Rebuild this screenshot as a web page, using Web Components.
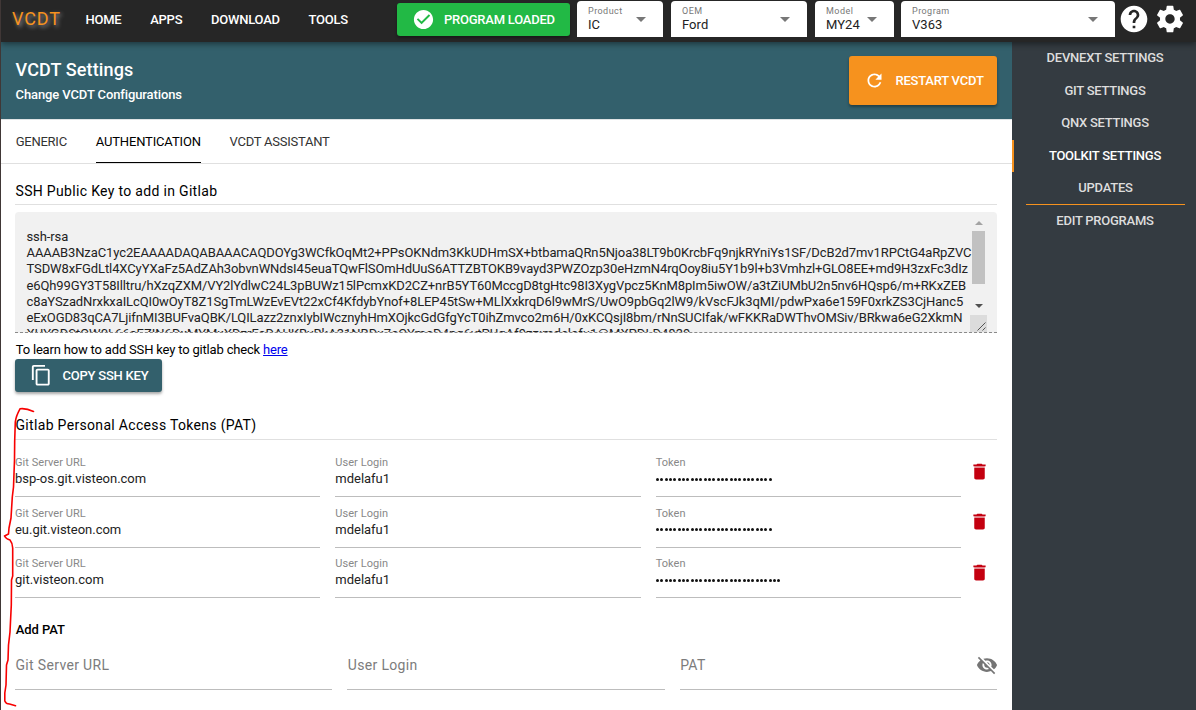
<!DOCTYPE html>
<html lang="en">
<head>
<meta charset="utf-8">
<title>VCDT Settings</title>
<style>
html,body{margin:0;height:100%;overflow:hidden}
body{font-family:Roboto,sans-serif;font-size:13px;color:#000;background:#fff}
</style>
</head>
<body>
<vcdt-app></vcdt-app>
<script>
const define = (name, html, setup) => {
  const t = document.createElement('template');
  t.innerHTML = '<style>*{box-sizing:border-box}:host{box-sizing:border-box}</style>' + html;
  customElements.define(name, class extends HTMLElement {
    constructor() {
      super();
      this.attachShadow({mode: 'open'}).append(t.content.cloneNode(true));
    }
    connectedCallback() { if (setup) setup(this, this.shadowRoot); }
  });
};

const ICONS = {
  check: '<path d="M12 2C6.48 2 2 6.48 2 12s4.48 10 10 10 10-4.48 10-10S17.52 2 12 2zm-2 15l-5-5 1.41-1.41L10 14.17l7.59-7.59L19 8l-9 9z"/>',
  help: '<path d="M12 2C6.48 2 2 6.48 2 12s4.48 10 10 10 10-4.48 10-10S17.52 2 12 2zm1 17h-2v-2h2v2zm2.07-7.75l-.9.92C13.45 12.9 13 13.5 13 15h-2v-.5c0-1.1.45-2.1 1.17-2.83l1.24-1.26c.37-.36.59-.86.59-1.41 0-1.1-.9-2-2-2s-2 .9-2 2H8c0-2.21 1.79-4 4-4s4 1.79 4 4c0 .88-.36 1.68-.93 2.25z"/>',
  gear: '<path d="M19.43 12.98c.04-.32.07-.64.07-.98s-.03-.66-.07-.98l2.11-1.65c.19-.15.24-.42.12-.64l-2-3.46c-.12-.22-.39-.3-.61-.22l-2.49 1c-.52-.4-1.08-.73-1.69-.98l-.38-2.65C14.46 2.18 14.25 2 14 2h-4c-.25 0-.46.18-.49.42l-.38 2.65c-.61.25-1.17.59-1.69.98l-2.49-1c-.23-.09-.49 0-.61.22l-2 3.46c-.13.22-.07.49.12.64l2.11 1.65c-.04.32-.07.65-.07.98s.03.66.07.98l-2.11 1.65c-.19.15-.24.42-.12.64l2 3.46c.12.22.39.3.61.22l2.49-1c.52.4 1.08.73 1.69.98l.38 2.65c.03.24.24.42.49.42h4c.25 0 .46-.18.49-.42l.38-2.65c.61-.25 1.17-.59 1.69-.98l2.49 1c.23.09.49 0 .61-.22l2-3.46c.12-.22.07-.49-.12-.64l-2.11-1.65zM12 15.5c-1.93 0-3.5-1.57-3.5-3.5s1.57-3.5 3.5-3.5 3.5 1.57 3.5 3.5-1.57 3.5-3.5 3.5z"/>',
  refresh: '<path d="M17.65 6.35C16.2 4.9 14.21 4 12 4c-4.42 0-7.99 3.58-7.99 8s3.57 8 7.99 8c3.73 0 6.84-2.55 7.73-6h-2.08c-.82 2.33-3.04 4-5.65 4-3.31 0-6-2.69-6-6s2.69-6 6-6c1.66 0 3.14.69 4.22 1.78L13 11h7V4l-2.35 2.35z"/>',
  copy: '<path d="M16 1H4c-1.1 0-2 .9-2 2v14h2V3h12V1zm3 4H8c-1.1 0-2 .9-2 2v14c0 1.1.9 2 2 2h11c1.100 0 2-.9 2-2V7c0-1.100-.9-2-2-2zm0 16H8V7h11v14z"/>',
  trash: '<path d="M6 19c0 1.100.9 2 2 2h8c1.100 0 2-.9 2-2V8H6z"/><path fill-opacity=".45" d="M6 6h12v2H6z"/><path d="M5 4h3.500l1-1h5l1 1H19v2H5z"/>',
  hidden: '<path d="M12 7c2.760 0 5 2.240 5 5 0 .65-.13 1.260-.36 1.830l2.920 2.920c1.510-1.260 2.700-2.890 3.430-4.750-1.730-4.390-6-7.500-11-7.500-1.400 0-2.740.25-3.980.7l2.160 2.160C10.740 7.130 11.350 7 12 7zM2 4.270l2.280 2.280.46.46C3.080 8.300 1.780 10.020 1 12c1.730 4.390 6 7.500 11 7.500 1.550 0 3.030-.3 4.380-.84l.42.42L19.730 22 21 20.730 3.270 3 2 4.270zM7.530 9.800l1.550 1.550c-.05.21-.08.43-.08.65 0 1.660 1.340 3 3 3 .22 0 .44-.03.65-.08l1.550 1.550c-.67.33-1.410.53-2.200.53-2.760 0-5-2.240-5-5 0-.79.2-1.530.53-2.200zm4.310-.78l3.150 3.150.02-.16c0-1.660-1.340-3-3-3l-.17.01z"/>'
};

define('vcdt-icon', `<style>
:host{display:block;flex:none;width:var(--size,24px);height:var(--size,24px)}
svg{display:block;width:100%;height:100%;fill:currentColor}
</style><svg viewBox="0 0 24 24"></svg>`,
(el, r) => { r.querySelector('svg').innerHTML = ICONS[el.getAttribute('name')]; });

define('vcdt-button', `<style>
:host{display:flex;flex:none;align-items:center;border-radius:3px;color:#fff;font-weight:500;white-space:nowrap;letter-spacing:-.23px;
 box-shadow:0 2px 3px rgba(0,0,0,.35)}
</style><slot></slot>`);

define('vcdt-select', `<style>
:host{display:flex;flex:none;height:36px;background:#fff;border-radius:4px 4px 0 0;justify-content:space-between;padding:3px 17px 0 11px}
.l{font-size:9px;line-height:14px;color:#777;letter-spacing:.45px}
.v{font-size:13px;line-height:14px;color:#222;letter-spacing:.05px}
i{width:0;height:0;border:5px solid transparent;border-top-color:#777;border-bottom:0;margin-top:13px}
</style><div><div class="l"></div><div class="v"><slot></slot></div></div><i></i>`,
(el, r) => { r.querySelector('.l').textContent = el.getAttribute('label'); });

define('vcdt-header', `<style>
:host{display:flex;position:relative;z-index:2;height:42px;background:#262626;box-shadow:0 2px 6px rgba(0,0,0,.45);align-items:flex-start;padding:1px 0 0 11px}
.brand{width:73.500px;font-size:18px;line-height:35px;color:#f6921e;text-shadow:2px 2px 4px rgba(255,255,255,.5);letter-spacing:.85px}
nav{display:flex;width:311.500px;gap:28.800px;color:#fff;font-weight:500;line-height:37px;letter-spacing:-.25px}
nav span{white-space:nowrap}
vcdt-button{width:173px;height:33px;margin:2px 7px 0 0;background:#22b945;padding-left:15px}
vcdt-button vcdt-icon{--size:23px;margin-right:9px}
vcdt-select{margin-right:8px}
.ic{color:#fff;--size:32px;margin-top:1.500px}
</style>
<div class="brand">VCDT</div>
<nav><span>HOME</span><span>APPS</span><span>DOWNLOAD</span><span>TOOLS</span></nav>
<vcdt-button><vcdt-icon name="check"></vcdt-icon>PROGRAM LOADED</vcdt-button>
<vcdt-select label="Product" style="width:86px">IC</vcdt-select>
<vcdt-select label="OEM" style="width:136px">Ford</vcdt-select>
<vcdt-select label="Model" style="width:79px;margin-right:7px">MY24</vcdt-select>
<vcdt-select label="Program" style="width:214px;margin-right:2.500px">V363</vcdt-select>
<vcdt-icon class="ic" name="help"></vcdt-icon>
<vcdt-icon class="ic" name="gear" style="margin-left:4.500px"></vcdt-icon>`);

define('vcdt-sidebar', `<style>
:host{display:block;width:184px;flex:none;background:#343b41;color:#ddd;font-weight:500;text-align:center;letter-spacing:-.25px}
div{height:32.500px;line-height:32px;padding-left:2px}
.on{color:#fff;border-left:2px solid #f6921e;padding-left:0}
.sep{margin:0 11px 0 14px;border-bottom:1px solid #f6921e;padding:0}
</style>
<div>DEVNEXT SETTINGS</div><div>GIT SETTINGS</div><div>QNX SETTINGS</div><div class="on">TOOLKIT SETTINGS</div><div class="sep">UPDATES</div><div>EDIT PROGRAMS</div>`);

define('vcdt-hero', `<style>
:host{display:flex;height:77px;background:#33606c;color:#fff;justify-content:space-between;padding:14px 15px 0 14.500px}
h1{margin:3px 0 0;font-size:18px;line-height:22px;font-weight:500;letter-spacing:.13px}
p{margin:5px 0 0;font-size:13px;line-height:18px;font-weight:500;letter-spacing:-.11px}
vcdt-button{width:148px;height:49px;background:#f6921e;padding-left:15px}
vcdt-icon{--size:21px;margin-right:10.500px}
</style><div><h1>VCDT Settings</h1><p>Change VCDT Configurations</p></div>
<vcdt-button><vcdt-icon name="refresh"></vcdt-icon>RESTART VCDT</vcdt-button>`);

define('vcdt-tabs', `<style>
:host{display:flex;height:45px;border-top:1px solid #dfe3e4;border-bottom:1px solid #e0e0e0;padding-left:14.700px;gap:28.800px;color:#333;line-height:43px;letter-spacing:-.25px}
.on{color:#000;border-bottom:1px solid #000;letter-spacing:-.15px}
</style><span>GENERIC</span><span class="on">AUTHENTICATION</span><span>VCDT ASSISTANT</span>`);

define('vcdt-heading', `<style>
:host{display:block;border-bottom:1px solid #e0e0e0;font-size:14px;line-height:20px;height:24px;letter-spacing:.32px;padding-left:.5px}
</style><slot></slot>`);

define('vcdt-key', `<style>
:host{display:flex;height:121px;background:#f1f1f1;border-radius:4px 4px 0 0;border-bottom:1px dashed #8a8a8a;padding-left:11.500px;overflow:hidden}
.t{width:945.500px;flex:none;padding-top:17px;color:#222;line-height:16.200px;white-space:nowrap}
.bar{width:13px;margin-top:7px;display:flex;flex-direction:column;align-items:center;flex:none}
.up,.dn{width:0;height:0;border:4px solid transparent}
.up{border-bottom-color:#a3a3a3;border-top:0;margin-top:2px}
.dn{border-top-color:#505050;border-bottom:0;margin-top:20px}
.th{width:13px;height:53px;background:#c1c1c1;margin-top:6px}
.grip{width:17px;height:17px;background:#dcdcdc;margin-top:7px;flex:none}
svg{display:block}
</style><div class="t"></div>
<div class="bar"><i class="up"></i><i class="th"></i><i class="dn"></i><div class="grip"><svg width="17" height="17" stroke="#555" fill="none"><path d="M7.500 15.500l8-8M12.500 15.500l3-3"/></svg></div></div>`,
(el, r) => {
  const lines = [
    ['ssh-rsa', -.1],
    ['AAAAB3NzaC1yc2EAAAADAQABAAACAQDOYg3WCfkOqMt2+PPsOKNdm3KkUDHmSX+btbamaQRn5Njoa38LT9b0KrcbFq9njkRYniYs1SF/DcB2d7mv1RPCtG4aRpZVC', -.105],
    ['TSDW8xFGdLtl4XCyYXaFz5AdZAh3obvnWNdsI45euaTQwFlSOmHdUuS6ATTZBTOKB9vayd3PWZOzp30eHzmN4rqOoy8iu5Y1b9l+b3Vmhzl+GLO8EE+md9H3zxFc3dIz', -.11],
    ['e6Qh99GY3T58Illtru/hXzqZXM/VY2lYdlwC24L3pBUWz15lPcmxKD2CZ+nrB5YT60MccgD8tgHtc98I3XygVpcz5KnM8pIm5iwOW/a3tZiUMbU2n5nv6HQsp6/m+RKxZEB', -.12],
    ['c8aYSzadNrxkxaILcQI0wOyT8Z1SgTmLWzEvEVt22xCf4KfdybYnof+8LEP45tSw+MLlXxkrqD6l9wMrS/UwO9pbGq2lW9/kVscFJk3qMI/pdwPxa6e159F0xrkZS3CjHanc5', -.11],
    ['eExOGD83qCA7LjifnMI3BUFvaQBK/LQILazz2znxIybIWcznyhHmXOjkcGdGfgYcT0ihZmvco2m6H/0xKCQsjI8bm/rNnSUCIfak/wFKKRaDWThvOMSiv/BRkwa6eG2XkmN', -.12],
    ['XUYGDStQW0L66sEZIN6DxMYMxXDzrFaDAUKByBkA31NBDx7aQYmaD4pg6vtPUgAf9zz:mdelafu1@MXPDLD4839', .03]
  ];
  for (const [text, sp] of lines) {
    const d = document.createElement('div');
    d.textContent = text;
    d.style.letterSpacing = sp + 'px';
    r.querySelector('.t').append(d);
  }
});

define('vcdt-field', `<style>
:host{display:block;flex:1;min-width:0;border-bottom:1px solid #bdbdbd;white-space:nowrap;padding-top:1px}
.l{font-size:11px;line-height:14px;color:#888;letter-spacing:.05px}
.v{font-size:13px;line-height:18px;color:#222;letter-spacing:-.02px}
:host([secret]) .v{display:flex;gap:1.330px;align-items:center;height:18px;padding-left:.5px}
.v b{width:3px;height:3px;border-radius:1.500px;background:#111}
</style><div class="l"></div><div class="v"><slot></slot></div>`,
(el, r) => {
  r.querySelector('.l').textContent = el.getAttribute('label');
});

define('vcdt-token-row', `<style>
:host{display:flex;gap:15px;height:42px}
.del{width:21px;display:flex;justify-content:center;flex:none;margin:0 7px 0 -7px;padding-top:5.500px;color:#c40010}
vcdt-icon{--size:21px}
</style><vcdt-field class="u" label="Git Server URL"></vcdt-field><vcdt-field label="User Login">mdelafu1</vcdt-field><vcdt-field class="s" label="Token"></vcdt-field><div class="del"><vcdt-icon name="trash"></vcdt-icon></div>`,
(el, r) => {
  r.querySelector('.u').textContent = el.getAttribute('url');
  const s = r.querySelector('.s');
  s.setAttribute('secret', '');
  s.shadowRoot.querySelector('.v').innerHTML = '<b></b>'.repeat(+el.getAttribute('length'));
});

define('vcdt-input', `<style>
:host{display:flex;flex:1;height:36px;border-bottom:1px solid #bdbdbd;color:#7c7c7c;font-size:14px;line-height:23px;letter-spacing:.33px;justify-content:space-between;padding-left:.5px}
</style><slot></slot>`);

define('vcdt-panel', `<style>
:host{display:flex;flex-direction:column;padding:17px 15px 0 14px}
vcdt-key{margin-top:7px}
.learn{margin-top:8px;line-height:18px;letter-spacing:-.18px;padding-left:.7px}
a{color:#00e}
vcdt-button{width:147px;height:33px;background:#33606c;padding-left:14.500px}
vcdt-button vcdt-icon{--size:22.500px;margin-right:10.500px}
.pat{margin-top:23px;height:25px}
.rows{display:flex;flex-direction:column;gap:8.600px;margin-top:15px}
h3{margin:22px 0 0;font-size:13px;line-height:20px;font-weight:500;padding-left:.7px;letter-spacing:-.05px}
.add{display:flex;gap:15px;margin-top:14px}
.eye{--size:22px;color:#757575;margin-right:-1px}
</style>
<vcdt-heading>SSH Public Key to add in Gitlab</vcdt-heading>
<vcdt-key></vcdt-key>
<div class="learn">To learn how to add SSH key to gitlab check <a href="#">here</a></div>
<vcdt-button><vcdt-icon name="copy"></vcdt-icon>COPY SSH KEY</vcdt-button>
<vcdt-heading class="pat">Gitlab Personal Access Tokens (PAT)</vcdt-heading>
<div class="rows">
<vcdt-token-row url="bsp-os.git.visteon.com" length="27"></vcdt-token-row>
<vcdt-token-row url="eu.git.visteon.com" length="27"></vcdt-token-row>
<vcdt-token-row url="git.visteon.com" length="29"></vcdt-token-row>
</div>
<h3>Add PAT</h3>
<div class="add"><vcdt-input>Git Server URL</vcdt-input><vcdt-input>User Login</vcdt-input><vcdt-input>PAT<vcdt-icon class="eye" name="hidden"></vcdt-icon></vcdt-input></div>`);

define('vcdt-annotation', `<style>
:host{position:absolute;left:-1px;top:400px;width:60px;height:310px;z-index:3;pointer-events:none}
svg{display:block}
</style><svg width="60" height="310" fill="none" stroke="#f80000" stroke-width="1.600" stroke-linecap="round" stroke-linejoin="round"><path d="M33.500 11.500Q26 8 20 8.800Q16 16 15.300 22Q14.500 40 14.500 60L13.500 87L12.300 97L11 118L9 128L8.500 134L4.500 136Q6 139 10 140Q12.500 143 12.700 148V176L11.500 180L11.300 205L10 232L8.500 245L8 260L6.500 265L6 285L4.800 293V301Q6 304 9.500 304L15.500 305.800"/></svg>`);

define('vcdt-app', `<style>
:host{display:block;height:710px;border-left:1px solid #403736;position:relative;overflow:hidden}
.body{display:flex;height:668px}
main{flex:1;min-width:0}
</style><vcdt-header></vcdt-header>
<div class="body"><main><vcdt-hero></vcdt-hero><vcdt-tabs></vcdt-tabs><vcdt-panel></vcdt-panel></main><vcdt-sidebar></vcdt-sidebar></div>
<vcdt-annotation></vcdt-annotation>`);
</script>
</body>
</html>
